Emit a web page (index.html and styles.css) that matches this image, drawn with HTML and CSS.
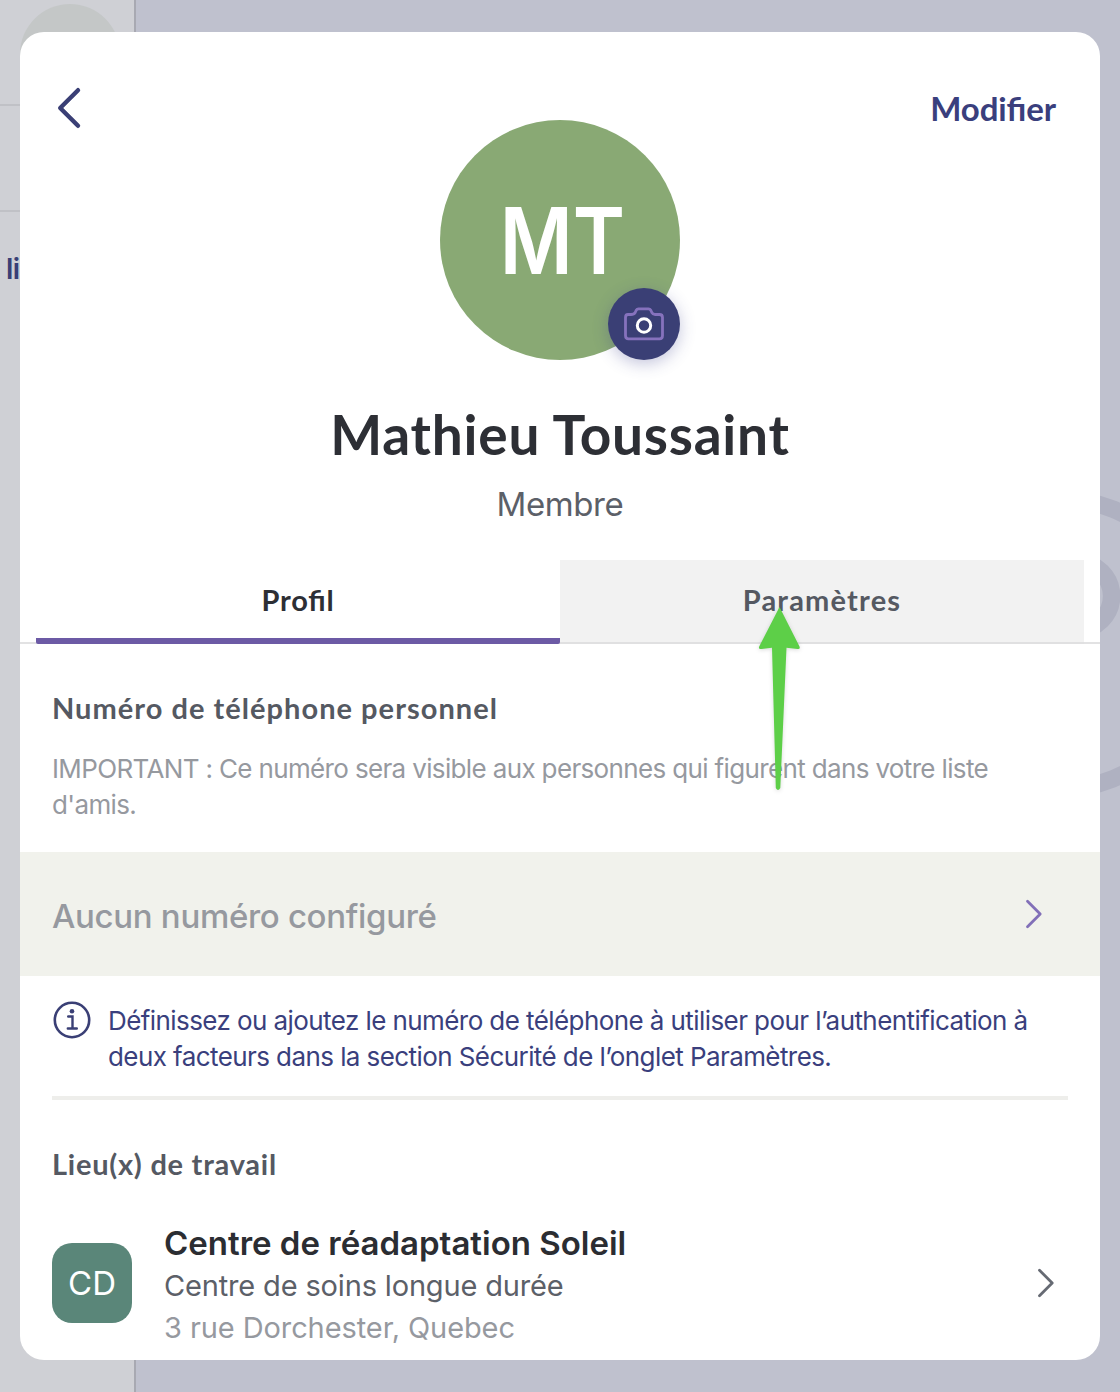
FILE: index.html
```html
<!DOCTYPE html>
<html lang="fr">
<head>
<meta charset="utf-8">
<title>Profil</title>
<link rel="stylesheet" href="styles.css">
</head>
<body>
<div class="app">
  <div class="sidebar">
    <div class="side-cell side-top"><div class="side-avatar"></div></div>
    <div class="side-cell"></div>
    <div class="side-link">li</div>
  </div>
  <svg class="watermark" width="220" height="320" viewBox="900 484 220 320" fill="none">
    <circle cx="1059.5" cy="644" r="145"/>
    <circle cx="1077.6" cy="596" r="34"/>
  </svg>
</div>

<main class="sheet">
  <header class="header">
    <button class="back" aria-label="Retour">
      <svg width="26" height="44" viewBox="0 0 26 44" fill="none"><path d="M22 4.2 4.200 22 22 39.800"/></svg>
    </button>
    <div class="avatar">
      <span class="initials">MT</span>
      <button class="camera" aria-label="Photo">
        <svg width="44" height="44" viewBox="0 0 44 44" fill="none">
          <path class="cam-body" d="M6 12.500H9Q12 12.500 13.200 10.500L14.200 8.200Q15 6.800 16.500 6.800H26.500Q28 6.800 28.800 8.200L29.800 10.500Q31 12.500 33 12.500H37.500Q40.500 12.500 40.500 15.500V33.500Q40.500 36.800 37.500 36.800H6.500Q3.500 36.800 3.500 33.500V15.500Q3.500 12.500 6 12.500Z"/>
          <circle class="cam-lens" cx="22" cy="23.500" r="6.700"/>
        </svg>
      </button>
    </div>
    <a class="edit">Modifier</a>
  </header>

  <h1 class="name">Mathieu Toussaint</h1>
  <p class="role">Membre</p>

  <nav class="tabs">
    <a class="tab active"><span>Profil</span></a>
    <a class="tab"><span>Paramètres</span></a>
  </nav>

  <section class="phone">
    <h2 class="heading">Numéro de téléphone personnel</h2>
    <p class="note">IMPORTANT : Ce numéro sera visible aux personnes qui figurent dans votre liste<br>d'amis.</p>
  </section>
  <a class="number-row">
    <span class="number">Aucun numéro configuré</span>
    <svg class="chev purple" width="20" height="32" viewBox="0 0 20 32" fill="none"><path d="M3.500 3.300 16.200 16 3.500 28.700"/></svg>
  </a>
  <div class="info">
    <svg class="info-icon" width="40" height="40" viewBox="0 0 40 40" fill="none">
      <circle cx="20" cy="20" r="17.200" stroke-width="2.600"/>
      <path d="M16.200 16.500H20.500V28.300M15.800 28.500H24.800" stroke-width="2.400"/>
      <circle class="dot" cx="20" cy="11.200" r="2.300"/>
    </svg>
    <p class="info-text">Définissez ou ajoutez le numéro de téléphone à utiliser pour l’authentification à<br>deux facteurs dans la section Sécurité de l’onglet Paramètres.</p>
  </div>
  <hr class="rule">

  <section class="work">
    <h2 class="heading work-heading">Lieu(x) de travail</h2>
    <a class="place">
      <div class="place-logo">CD</div>
      <div class="place-text">
        <div class="place-name">Centre de réadaptation Soleil</div>
        <div class="place-kind">Centre de soins longue durée</div>
        <div class="place-address">3 rue Dorchester, Quebec</div>
      </div>
      <svg class="chev gray" width="20" height="32" viewBox="0 0 20 32" fill="none"><path d="M3.500 3.300 16.200 16 3.500 28.700"/></svg>
    </a>
  </section>
</main>

<svg class="pointer" width="44" height="188" viewBox="0 0 44 188">
  <path d="M22.500 3 42.500 42.500Q43.500 45.500 40.500 45L29.500 43.800 23.300 184Q21 188 18.800 184L15 43.800 4.500 45Q1 45.500 2.200 42.500Z"/>
</svg>
</body>
</html>
```

FILE: styles.css
```css
* { box-sizing: border-box; margin: 0; padding: 0; }

body {
  position: relative;
  width: 1120px;
  height: 1392px;
  padding: 32px 20px;
  overflow: hidden;
  background: #bfc1ce;
  font-family: Inter, "Liberation Sans", sans-serif;
}

button { border: 0; background: none; }
svg { display: block; }

/* dimmed application behind the sheet */
.app {
  position: absolute;
  inset: 0;
  display: flex;
}
.sidebar {
  width: 136px;
  background: #cfd0d5;
  border-right: 2px solid #a8a9b2;
}
.side-cell { height: 106px; border-bottom: 2px solid #c0c1c6; }
.side-top { padding: 4px 0 0 20px; }
.side-avatar { width: 100px; height: 100px; border-radius: 50%; background: #c4c7c7; }
.side-link {
  padding: 39px 0 0 6px;
  font-size: 28px;
  line-height: 36px;
  font-weight: 600;
  letter-spacing: -.7px;
  color: #3a3f75;
}
.watermark { position: absolute; right: 0; top: 484px; stroke: #afb1c1; stroke-width: 17.500px; }

.sheet {
  position: relative;
  height: 1328px;
  overflow: hidden;
  border-radius: 24px;
  background: #fff;
}

.header {
  display: grid;
  grid-template-columns: 1fr 240px 1fr;
  align-items: start;
  height: 328px;
}
.back { justify-self: start; margin: 54px 0 0 36px; }
.back path { stroke: #3a3f75; stroke-width: 4.400px; stroke-linecap: round; stroke-linejoin: round; }
.avatar {
  position: relative;
  display: flex;
  align-items: center;
  justify-content: center;
  height: 240px;
  margin-top: 88px;
  border-radius: 50%;
  background: #89a974;
}
.initials {
  padding: 2px 0 0 5px;
  font-size: 92px;
  line-height: 100px;
  font-weight: 600;
  color: #fff;
  transform: scaleX(.86);
}
.camera {
  position: absolute;
  right: 0;
  bottom: 0;
  display: flex;
  align-items: center;
  justify-content: center;
  width: 72px;
  height: 72px;
  border-radius: 50%;
  background: #3a3f75;
  box-shadow: 0 4px 16px rgba(58, 63, 140, .3);
}
.cam-body { stroke: #8672bd; stroke-width: 2.800px; stroke-linejoin: round; }
.cam-lens { stroke: #fff; stroke-width: 3px; }
.edit {
  justify-self: end;
  margin: 56px 44px 0 0;
  font-family: Lato, sans-serif;
  font-size: 33px;
  line-height: 40px;
  font-weight: 700;
  letter-spacing: -.1px;
  font-feature-settings: "liga" 1;
  color: #3a3f7d;
}

.name {
  height: 96px;
  padding-top: 41px;
  font-family: Lato, sans-serif;
  font-size: 55px;
  line-height: 66px;
  font-weight: 700;
  letter-spacing: .75px;
  text-align: center;
  color: #2d2f35;
}
.role {
  height: 104px;
  padding-top: 28px;
  font-size: 33px;
  line-height: 40px;
  letter-spacing: -.4px;
  text-align: center;
  color: #5c6068;
}

.tabs {
  display: flex;
  height: 84px;
  padding: 0 16px;
  border-bottom: 2px solid #e2e2e3;
}
.tab {
  flex: 1;
  display: flex;
  justify-content: center;
  height: 84px;
  padding-top: 22px;
  font-family: Lato, sans-serif;
  font-size: 29px;
  line-height: 36px;
  font-weight: 700;
  letter-spacing: 1.200px;
  font-feature-settings: "liga" 1;
  color: #555962;
  background: #f2f2f2;
  border-bottom: 2px solid #e0e0e1;
}
.tab.active {
  color: #2d2f35;
  letter-spacing: .8px;
  background: #fff;
  border-bottom: 6px solid #6c5aa5;
  border-radius: 0 0 2px 2px;
}

.heading {
  font-family: Lato, sans-serif;
  font-size: 29px;
  line-height: 36px;
  font-weight: 700;
  letter-spacing: 1.030px;
  color: #555962;
}
.work-heading { letter-spacing: .75px; }
.phone { height: 208px; padding: 46px 32px 0; }
.note {
  margin-top: 25px;
  font-size: 26px;
  line-height: 36px;
  letter-spacing: -.645px;
  white-space: nowrap;
  color: #96999f;
}
.number-row {
  display: flex;
  align-items: center;
  justify-content: space-between;
  height: 124px;
  padding: 0 56px 0 32px;
  background: #f1f2ec;
}
.number {
  padding-top: 3px;
  font-size: 33px;
  line-height: 40px;
  font-weight: 500;
  letter-spacing: -.32px;
  color: #96999f;
}
.chev path { stroke-width: 2.800px; stroke-linecap: round; stroke-linejoin: round; }
.purple { stroke: #8270b8; }
.gray { stroke: #666a73; }
.info { display: flex; gap: 16px; height: 120px; padding: 24px 32px 0; }
.info-icon { flex: none; stroke: #3a3f75; stroke-linecap: round; }
.info-icon .dot { fill: #3a3f75; stroke: none; }
.info-text {
  padding-top: 3px;
  font-size: 26px;
  line-height: 36px;
  letter-spacing: -.58px;
  white-space: nowrap;
  color: #3a3f7d;
}
.rule { height: 4px; margin: 0 32px; border: 0; background: #eeeeeb; }

.work { padding: 46px 32px 0; }
.place { display: flex; align-items: center; height: 128px; margin-top: 38px; padding-right: 12px; }
.place-logo {
  display: flex;
  align-items: center;
  justify-content: center;
  width: 80px;
  height: 80px;
  margin-right: 32px;
  margin-top: -2px;
  border-radius: 20px;
  background: #5a8679;
  color: #fff;
  font-size: 33px;
}
.place-text { flex: 1; padding-top: 2px; white-space: nowrap; }
.place-name { font-size: 33px; line-height: 44px; font-weight: 600; color: #2b2d32; }
.place-kind { font-size: 29px; line-height: 42px; letter-spacing: -.16px; color: #5c6068; }
.place-address { font-size: 29px; line-height: 42px; letter-spacing: -.09px; color: #96999f; }
.gray { margin-top: -2px; }

.pointer {
  position: absolute;
  left: 757px;
  top: 604px;
  fill: #5dcf48;
  filter: drop-shadow(0 1px 2px rgba(0, 0, 0, .15));
}
```
